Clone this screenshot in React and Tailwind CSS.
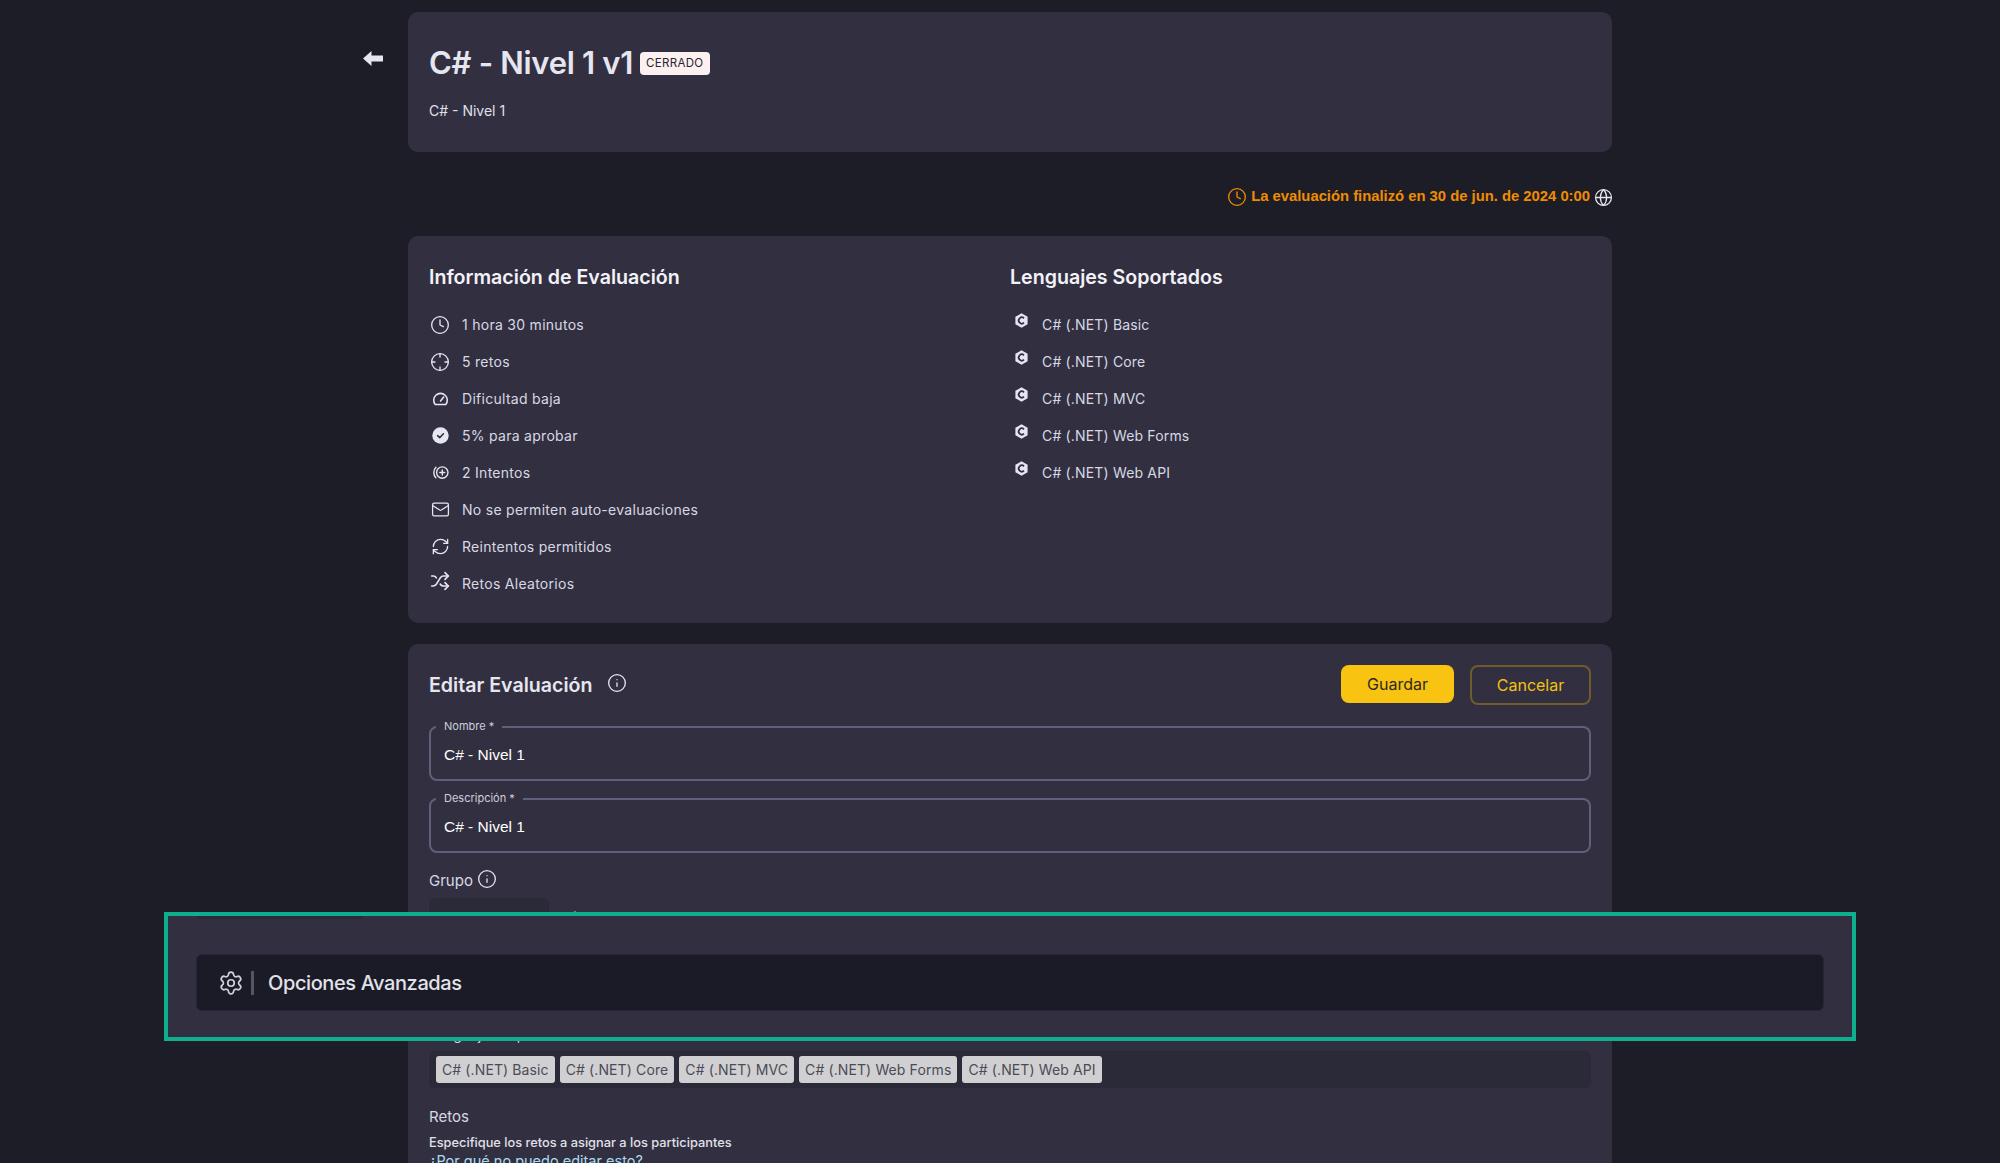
import React from 'react';
import { Clock, Crosshair, Mail, RefreshCw, Shuffle, Globe, Info, Settings } from 'lucide-react';

const evalInfo = [
  { icon: <Clock size={20} strokeWidth={1.6} />, text: '1 hora 30 minutos' },
  { icon: <Crosshair size={20} strokeWidth={1.6} />, text: '5 retos' },
  { icon: <GaugeClosed />, text: 'Dificultad baja' },
  { icon: <CheckFilled />, text: '5% para aprobar' },
  { icon: <Attempts />, text: '2 Intentos' },
  { icon: <Mail size={19} strokeWidth={1.6} />, text: 'No se permiten auto-evaluaciones' },
  { icon: <RefreshCw size={19} strokeWidth={1.7} />, text: 'Reintentos permitidos' },
  { icon: <Shuffle size={20} strokeWidth={2} className="-mt-[6px]" />, text: 'Retos Aleatorios' },
];

const languages = ['C# (.NET) Basic', 'C# (.NET) Core', 'C# (.NET) MVC', 'C# (.NET) Web Forms', 'C# (.NET) Web API'];

function BackArrow() {
  return (
    <svg width="20" height="15" viewBox="0 0 20 15" fill="#e6e6f0">
      <path d="M0 7.5 8.5 0v4.5H20v6H8.5V15z" />
    </svg>
  );
}

function GaugeClosed() {
  return (
    <svg width="17" height="17" viewBox="0 0 24 24" fill="none" stroke="currentColor" strokeWidth="2.2" strokeLinecap="round" strokeLinejoin="round">
      <path d="M4.6 20.5a9.6 9.6 0 1 1 14.8 0z" />
      <path d="m12 15.5 4.5-5.5" />
    </svg>
  );
}

function CheckFilled() {
  return (
    <svg width="17" height="17" viewBox="0 0 17 17">
      <circle cx="8.5" cy="8.5" r="8.2" fill="#e6e6f2" />
      <path d="m5.6 8.7 2.1 2 3.7-3.9" fill="none" stroke="#323040" strokeWidth="1.6" strokeLinecap="round" strokeLinejoin="round" />
    </svg>
  );
}

function Attempts() {
  return (
    <svg width="17" height="17" viewBox="0 0 24 24" fill="none" stroke="currentColor" strokeWidth="2" strokeLinecap="round">
      <circle cx="14.5" cy="12" r="8" />
      <path d="M14.5 8.5v7M11 12h7" />
      <path d="M5.5 4.5a11 11 0 0 0 0 15" />
    </svg>
  );
}

function CSharpIcon() {
  return (
    <svg width="13" height="15" viewBox="0 0 13 15" className="-mt-[8px] shrink-0">
      <path d="M6.5 0.3 12.6 3.8v7.4L6.5 14.7.4 11.2V3.8z" fill="#e6e6f2" />
      <path d="M9 5.3a3.1 3.1 0 1 0 0 4.4" fill="none" stroke="#323040" strokeWidth="1.7" />
    </svg>
  );
}

function OutlinedField({ label, value }) {
  return (
    <div className="relative flex h-[55px] items-center rounded-lg border-2 border-[#5f607a] pl-[13px] pt-[2px]">
      <span className="absolute left-[5px] -top-[9px] bg-[#323040] px-2 text-[11px] leading-[14px] text-[#cfcfdb]">{label}</span>
      <span className="font-['Liberation_Sans',sans-serif] text-[15.5px] text-white">{value}</span>
    </div>
  );
}

export default function App() {
  return (
    <div className="relative h-screen overflow-hidden bg-[#1d1d28] font-[Inter,sans-serif] text-[#dcdce8]">
      <div className="flex pl-[363px] pt-3">
        <div className="w-[45px] pt-[39px]">
          <BackArrow />
        </div>

        <div className="flex w-[1204px] flex-col">
          {/* encabezado */}
          <section className="h-[140px] rounded-[10px] bg-[#323040] px-[21px] pt-[33px]">
            <div className="flex h-9 items-center gap-[7px]">
              <h1 className="text-[31px] font-semibold leading-9 tracking-[-0.01em] text-[#e6e6f0]">C# - Nivel 1 v1</h1>
              <span className="mt-[1px] flex h-[23px] items-center rounded bg-[#fdf0f0] px-[6px] text-[11.5px] tracking-[0.03em] text-[#26252f]">CERRADO</span>
            </div>
            <p className="mt-5 text-[14px] leading-5 text-[#e0e0ea]">C# - Nivel 1</p>
          </section>

          <div className="flex h-[84px] items-center justify-end gap-1 pt-[5px] text-[#f08c00]">
            <Clock size={20} strokeWidth={1.6} />
            <span className="font-['Liberation_Sans',sans-serif] text-[14.8px] font-bold">La evaluación finalizó en 30 de jun. de 2024 0:00</span>
            <Globe size={19} strokeWidth={1.6} className="-mr-[1px] mt-[2px] text-[#e6e6f0]" />
          </div>

          {/* informacion */}
          <section className="grid h-[387px] grid-cols-2 rounded-[10px] bg-[#323040] px-[21px] pt-[28px]">
            <div>
              <h2 className="h-[26px] text-[19.6px] font-semibold leading-[26px] text-[#f2f2f8]">Información de Evaluación</h2>
              <ul className="mt-4">
                {evalInfo.map((item) => (
                  <li key={item.text} className="flex h-[37px] items-center">
                    <span className="ml-[1px] flex w-5 justify-center text-[#e6e6f2]">{item.icon}</span>
                    <span className="ml-3 text-[14px] tracking-[0.02em] text-[#d8d8e4]">{item.text}</span>
                  </li>
                ))}
              </ul>
            </div>
            <div>
              <h2 className="h-[26px] text-[19.6px] font-semibold leading-[26px] text-[#f2f2f8]">Lenguajes Soportados</h2>
              <ul className="mt-4">
                {languages.map((lang) => (
                  <li key={lang} className="flex h-[37px] items-center pl-[5px]">
                    <CSharpIcon />
                    <span className="ml-[14px] text-[14px] tracking-[0.012em] text-[#d8d8e4]">{lang}</span>
                  </li>
                ))}
              </ul>
            </div>
          </section>

          {/* editar */}
          <section className="mt-[21px] h-[600px] rounded-t-[10px] bg-[#323040] px-[21px] pt-[21px]">
            <div className="flex h-10 items-start justify-between">
              <div className="flex h-10 items-center gap-[14px]">
                <h2 className="pt-[1px] text-[19.6px] font-semibold text-[#e6e6f0]">Editar Evaluación</h2>
                <Info size={20} strokeWidth={1.6} className="-mt-[5px] text-[#e6e6f0]" />
              </div>
              <div className="flex gap-4">
                <button className="h-[38px] w-[113px] rounded-lg bg-[#f9c312] text-[16px] text-[#2c2a20]">Guardar</button>
                <button className="h-[40px] w-[121px] rounded-lg border-2 border-[#6e5c2c] text-[16px] text-[#f5c012]">Cancelar</button>
              </div>
            </div>

            <div className="mt-[21px] flex flex-col gap-[17px]">
              <OutlinedField label="Nombre *" value="C# - Nivel 1" />
              <OutlinedField label="Descripción *" value="C# - Nivel 1" />
            </div>

            <div className="mt-[17px] flex h-[22px] items-center gap-1">
              <span className="text-[15px] text-[#d8d8e4]">Grupo</span>
              <Info size={20} strokeWidth={1.6} className="-mt-[5px] text-[#e6e6f0]" />
            </div>
            <div className="mt-[6px] flex items-center gap-4">
              <div className="h-10 w-[120px] rounded-md bg-[#2a2a38]" />
              <span className="text-[13px] text-[#c9c9d6]">Sin grupo</span>
            </div>

            <p className="mt-[87px] text-[14px] leading-5 text-[#d8d8e4]">Lenguajes soportados</p>
            <div className="mt-[6px] flex h-[37px] items-center gap-[5px] rounded-md bg-[#2a2a38] pl-[7px]">
              {languages.map((lang) => (
                <span key={lang} className="flex h-[27px] items-center rounded-[3px] bg-[#d0d0d2] px-[6px] text-[14px] tracking-[0.008em] text-[#4b4b55]">{lang}</span>
              ))}
            </div>

            <p className="mt-[18px] text-[15px] leading-[22px] text-[#d8d8e4]">Retos</p>
            <p className="mt-[5px] text-[12.8px] font-medium leading-5 text-[#e0e0ea]">Especifique los retos a asignar a los participantes</p>
            <a className="-mt-[2px] block text-[14.5px] leading-5 text-[#a9dcf0] underline">¿Por qué no puedo editar esto?</a>
          </section>
        </div>
      </div>

      {/* recuadro resaltado sobre la pagina */}
      <div className="absolute left-[164px] top-[912px] h-[129px] w-[1692px] border-4 border-[#0eaf8f] bg-[#323040] px-[28px] pt-[38px]">
        <div className="absolute left-[29px] top-0 h-[3px] w-[166px] rounded-b bg-[#2b2a38]" />
        <div className="flex h-[57px] items-center rounded-md border border-[#262635] bg-[#1a1b26] pl-[21px]">
          <Settings size={26} strokeWidth={1.6} className="text-[#d0d0da]" />
          <div className="ml-[7px] h-6 w-[3px] bg-[#55555f]" />
          <span className="ml-[14px] pt-[1px] text-[20px] font-medium tracking-[-0.02em] text-[#e2e2ea]">Opciones Avanzadas</span>
        </div>
      </div>
    </div>
  );
}
